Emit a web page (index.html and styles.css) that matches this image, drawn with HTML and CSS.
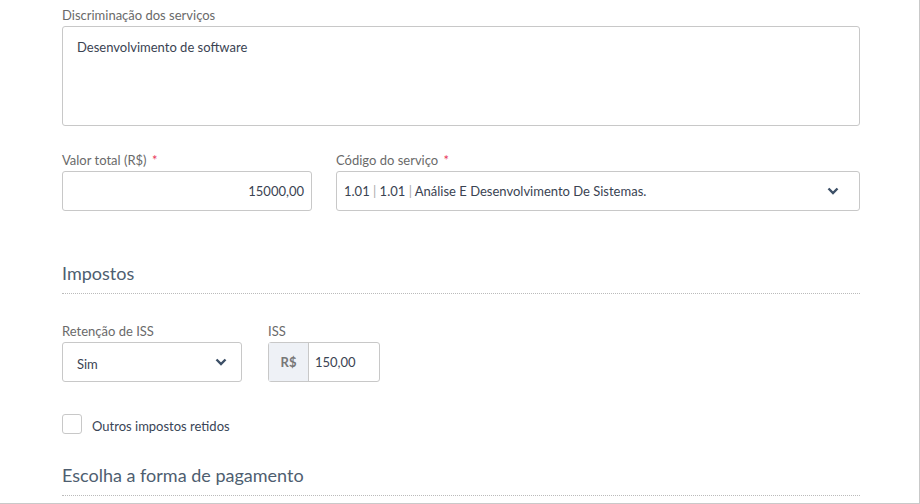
FILE: index.html
```html
<!DOCTYPE html>
<html lang="pt-BR">
<head>
    <meta charset="UTF-8">
    <title>Emitir nota fiscal</title>
    <link rel="stylesheet" href="styles.css">
</head>
<body>
    <div class="page">
        <div class="content">
            <div class="form-group">
                <label>Discriminação dos serviços</label>
                <div class="textarea">Desenvolvimento de software</div>
            </div>

            <div class="row">
                <div class="form-group valor">
                    <label>Valor total (R$) <span class="req">*</span></label>
                    <div class="input right">15000,00</div>
                </div>
                <div class="form-group codigo">
                    <label>Código do serviço <span class="req">*</span></label>
                    <div class="input select small">
                        <span>1.01 <span class="sep">|</span> 1.01 <span class="sep">|</span> Análise E Desenvolvimento De Sistemas.</span>
                        <svg class="chevron" width="12" height="8" viewBox="0 0 12 8"><path d="M1.5 1.5 L6 6 L10.5 1.5" fill="none" stroke="#3d5067" stroke-width="2.4"/></svg>
                    </div>
                </div>
            </div>

            <h3 class="section">Impostos</h3>

            <div class="row taxes">
                <div class="form-group retencao">
                    <label>Retenção de ISS</label>
                    <div class="input select padded">
                        <span class="low">Sim</span>
                        <svg class="chevron" width="12" height="8" viewBox="0 0 12 8"><path d="M1.5 1.5 L6 6 L10.5 1.5" fill="none" stroke="#3d5067" stroke-width="2.4"/></svg>
                    </div>
                </div>
                <div class="form-group iss">
                    <label>ISS</label>
                    <div class="input-group">
                        <span class="addon">R$</span>
                        <span class="value">150,00</span>
                    </div>
                </div>
            </div>

            <div class="check">
                <span class="box"></span>
                <span class="low">Outros impostos retidos</span>
            </div>

            <h3 class="section pay">Escolha a forma de pagamento</h3>
        </div>
    </div>
</body>
</html>
```

FILE: styles.css
```css
body {
    margin: 0;
    background: #fff;
    font-family: 'Lato', 'Liberation Sans', sans-serif;
}
.page {
    width: 919px;
    height: 503px;
    border-right: 1px solid #c9c9c9;
    border-bottom: 1px solid #c9c9c9;
    overflow: hidden;
}
.content {
    width: 798px;
    margin-left: 62px;
    padding-top: 7px;
}
.form-group label {
    display: block;
    font-size: 13px;
    line-height: 16px;
    color: #6a6a6a;
    margin-bottom: 3px;
}
.req {
    color: #e8385a;
    margin-left: 2px;
}
.textarea {
    box-sizing: border-box;
    height: 100px;
    border: 1px solid #c8c8c8;
    border-radius: 3px;
    padding: 12px 14px;
    font-size: 13px;
    line-height: 16px;
    color: #3a4352;
}
.row {
    display: flex;
    gap: 24px;
    margin-top: 26px;
}
.valor { width: 250px; }
.codigo { flex: 1; }
.input {
    box-sizing: border-box;
    height: 40px;
    border: 1px solid #c8c8c8;
    border-radius: 3px;
    padding: 0 7px;
    display: flex;
    align-items: center;
    font-size: 13px;
    color: #3a4352;
}
.input.right { justify-content: flex-end; }
.input.select { justify-content: space-between; padding-right: 20px; }
.input.padded { padding-left: 14px; padding-right: 14px; }
.low { padding-top: 3px; }
.sep { color: #aaa; }
.chevron { display: block; }
.section {
    margin: 50px 0 0;
    padding-bottom: 8px;
    font-size: 18px;
    line-height: 24px;
    font-weight: normal;
    color: #4e5e70;
    border-bottom: 1px dotted #bbb;
}
.taxes {
    gap: 26px;
    margin-top: 29px;
}
.retencao { width: 180px; }
.input-group {
    box-sizing: border-box;
    width: 112px;
    height: 40px;
    border: 1px solid #c8c8c8;
    border-radius: 3px;
    display: flex;
    font-size: 13px;
    color: #3a4352;
}
.addon {
    width: 39px;
    background: #eef1f6;
    border-right: 1px solid #c8c8c8;
    display: flex;
    align-items: center;
    justify-content: center;
    font-weight: bold;
    color: #777;
}
.value {
    display: flex;
    align-items: center;
    padding-left: 6px;
}
.check {
    display: flex;
    align-items: center;
    gap: 10px;
    margin-top: 32px;
    font-size: 13px;
    color: #3a4556;
}
.box {
    box-sizing: border-box;
    width: 20px;
    height: 20px;
    border: 1px solid #c8c8c8;
    border-radius: 3px;
}
.section.pay { margin-top: 29px; }
```
